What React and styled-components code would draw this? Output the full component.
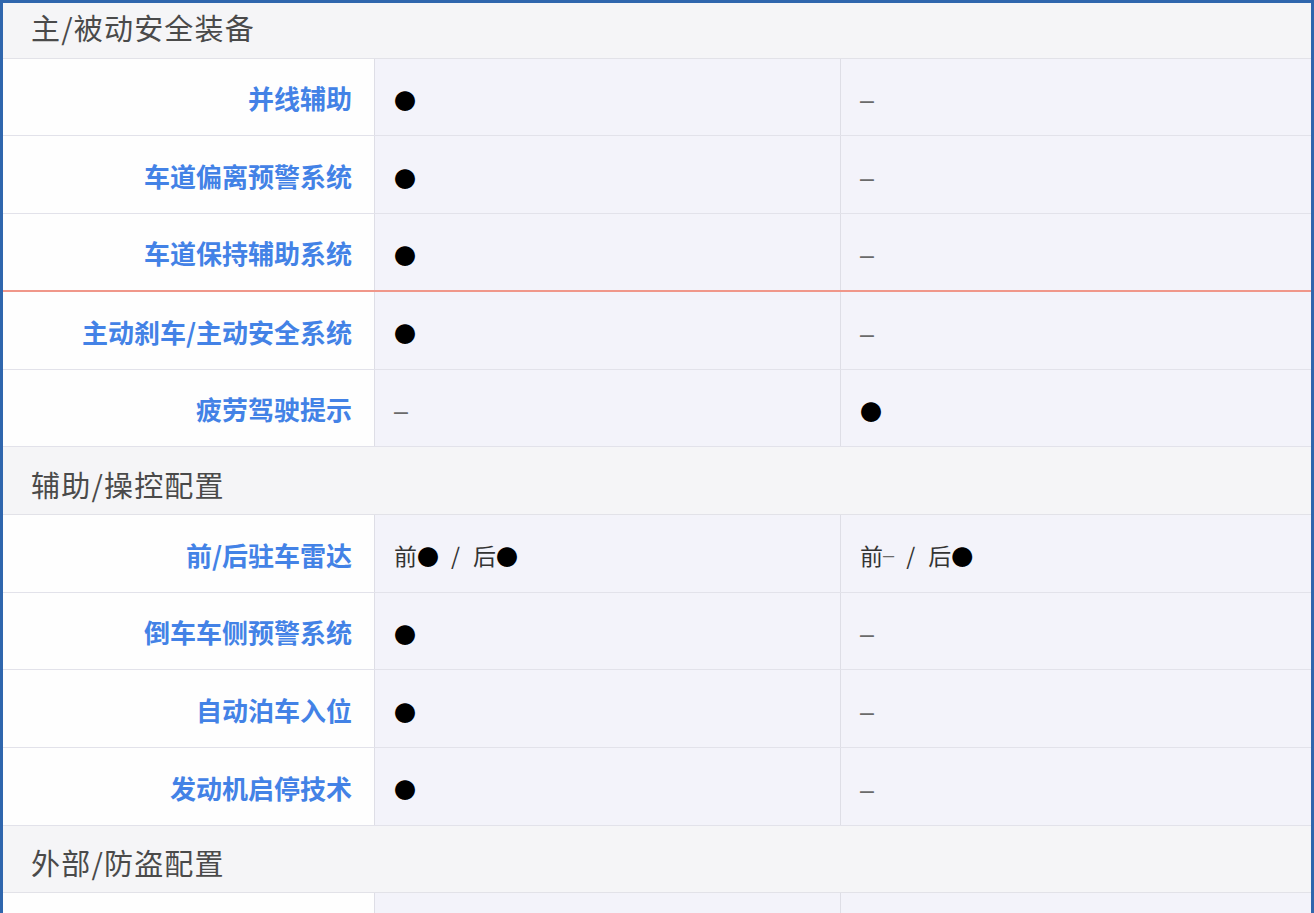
import React from 'react';
import styled, {createGlobalStyle} from 'styled-components';

const GlobalStyle = createGlobalStyle`
	html, body {
		margin: 0;
		padding: 0;
		overflow: hidden;
		background: #ffffff;
	}
	* {
		box-sizing: border-box;
	}
`;

const sections = [
	{
		title: '主/被动安全装备',
		rows: [
			{label: '并线辅助', a: '●', b: '–'},
			{label: '车道偏离预警系统', a: '●', b: '–'},
			{label: '车道保持辅助系统', a: '●', b: '–', mark: true},
			{label: '主动刹车/主动安全系统', a: '●', b: '–'},
			{label: '疲劳驾驶提示', a: '–', b: '●'},
		],
	},
	{
		title: '辅助/操控配置',
		rows: [
			{label: '前/后驻车雷达', a: '前● / 后●', b: '前– / 后●'},
			{label: '倒车车侧预警系统', a: '●', b: '–'},
			{label: '自动泊车入位', a: '●', b: '–'},
			{label: '发动机启停技术', a: '●', b: '–'},
		],
	},
	{
		title: '外部/防盗配置',
		rows: [{label: '', a: '', b: ''}],
	},
];

// 값 텍스트를 기호별로 나눠서 렌더링
function Value({text}) {
	const parts = text.split(/([●–/])/).filter(Boolean);
	const alone = parts.length === 1;
	return (
		<ValueText>
			{parts.map((p, i) => {
				if (p === '●') return <Dot key={i}>●</Dot>;
				if (p === '–') return <Dash key={i} $alone={alone}>–</Dash>;
				if (p === '/') return <Slash key={i}>/</Slash>;
				return <span key={i}>{p.trim()}</span>;
			})}
		</ValueText>
	);
}

export default function App() {
	return (
		<>
			<GlobalStyle />
			<Frame>
				<Sheet>
					{sections.map((s) => (
						<React.Fragment key={s.title}>
							<SectionHeader>{s.title}</SectionHeader>
							{s.rows.map((r, i) => (
								<Row key={i} $mark={r.mark}>
									<LabelCell>{r.label}</LabelCell>
									<ValueCell>
										<Value text={r.a} />
									</ValueCell>
									<ValueCell $last>
										<Value text={r.b} />
									</ValueCell>
								</Row>
							))}
						</React.Fragment>
					))}
				</Sheet>
			</Frame>
		</>
	);
}

const Frame = styled.div`
	width: 1314px;
	height: 913px;
	overflow: hidden;
	border-top: 3px solid #2f66ad;
	border-left: 3px solid #2f66ad;
	border-right: 3px solid #2f66ad;
	background: #ffffff;
	font-family: 'Noto Sans CJK SC', 'Noto Sans', sans-serif;
`;

const Sheet = styled.div`
	margin-top: -12px;
	display: flex;
	flex-direction: column;
`;

const SectionHeader = styled.div`
	height: 67.5px;
	flex-shrink: 0;
	display: flex;
	align-items: center;
	padding: 6px 0 0 28px;
	background: #f5f5f7;
	border-bottom: 1px solid #e2e2e8;
	color: #4a4a4a;
	font-size: 29px;
	letter-spacing: 1.2px;
`;

const Row = styled.div`
	height: 77.75px;
	flex-shrink: 0;
	display: grid;
	grid-template-columns: 372px 466px 1fr;
	border-bottom: ${(p) => (p.$mark ? '2px solid #f0978a' : '1px solid #e2e2ea')};
`;

const LabelCell = styled.div`
	display: flex;
	align-items: center;
	justify-content: flex-end;
	padding: 2px 22px 0 0;
	background: #fefefe;
	border-right: 1px solid #dedee6;
	color: #4382e6;
	font-size: 26px;
	font-weight: 700;
`;

const ValueCell = styled.div`
	display: flex;
	align-items: center;
	padding: 4px 0 0 19px;
	background: #f3f3fa;
	border-right: ${(p) => (p.$last ? 'none' : '1px solid #dedee6')};
`;

const ValueText = styled.span`
	display: inline-flex;
	align-items: center;
	color: #333333;
	font-size: 23px;
	white-space: pre;
`;

const Dot = styled.span`
	color: #000000;
	font-size: 22px;
	line-height: 1;
`;

const Dash = styled.span`
	color: #6a6a6a;
	font-family: 'Liberation Sans', sans-serif;
	font-size: ${(p) => (p.$alone ? '25px' : '20px')};
	line-height: 1;
	margin-top: ${(p) => (p.$alone ? '4px' : '0')};
`;

const Slash = styled.span`
	margin: 0 13px 0 12px;
	color: #333333;
`;
